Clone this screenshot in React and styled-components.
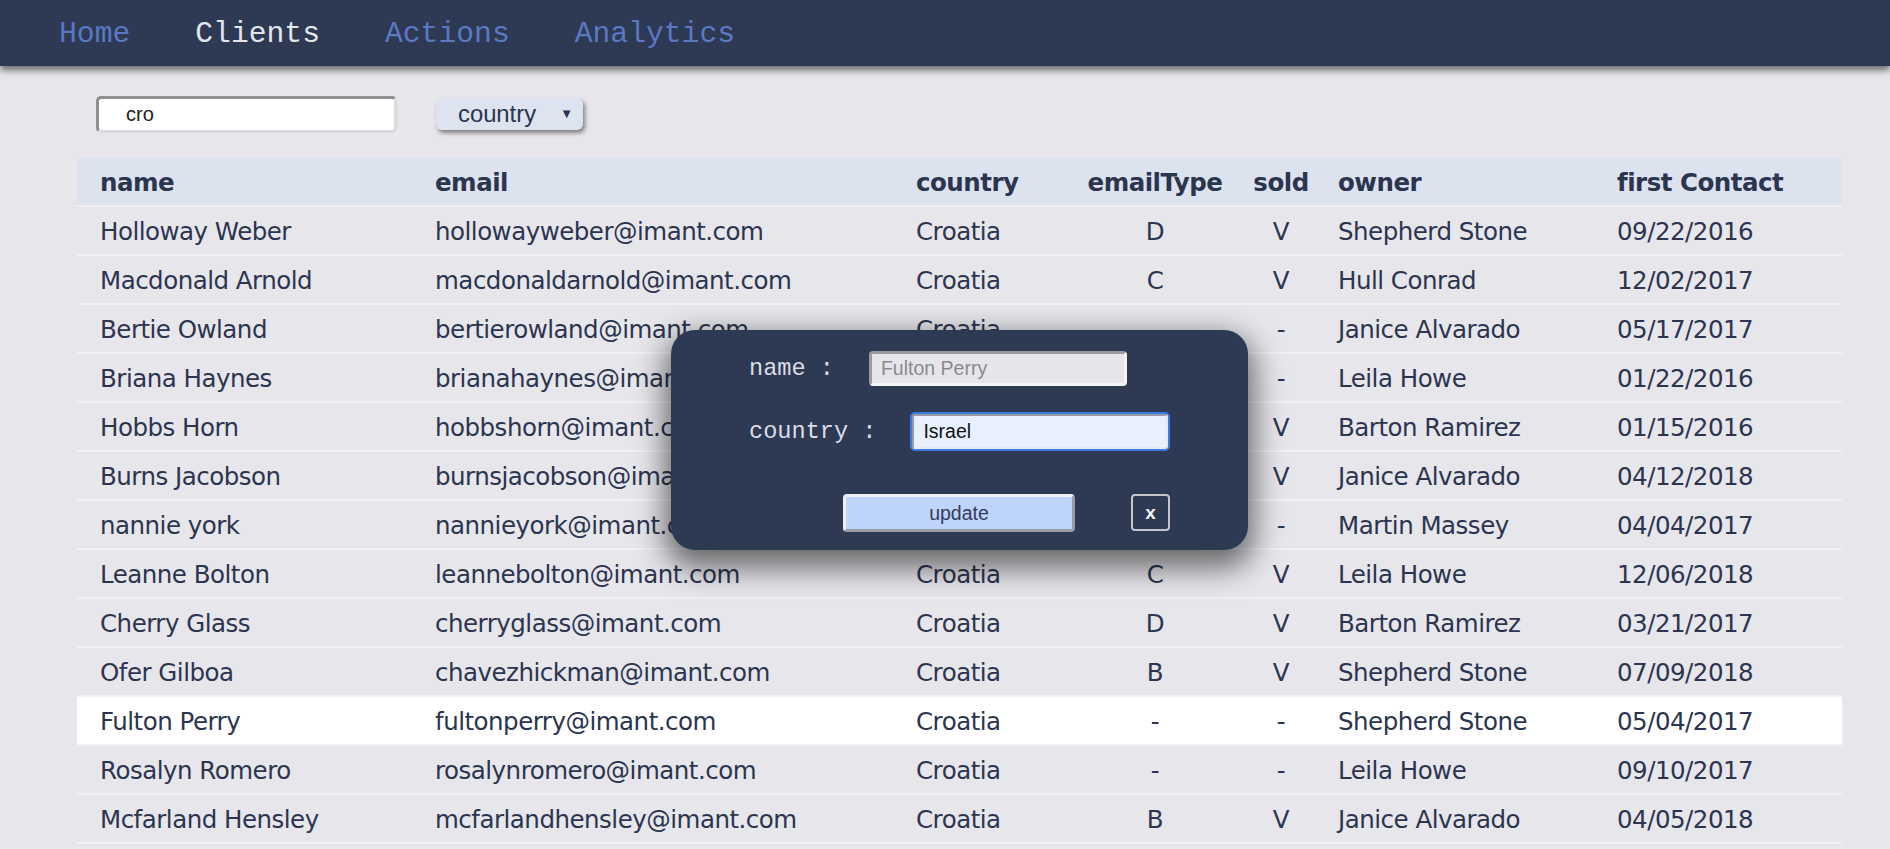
import React from 'react';
import styled, { createGlobalStyle } from 'styled-components';

const GlobalStyle = createGlobalStyle`
  html, body {
    margin: 0;
    padding: 0;
    background: #e7e6eb;
    overflow: hidden;
  }
`;

const Nav = styled.nav`
  height: 66px;
  background: #2e3a53;
  display: flex;
  align-items: center;
  gap: 65px;
  padding: 3px 0 0 59px;
  box-sizing: border-box;
  box-shadow: 0 4px 7px rgba(0, 0, 0, 0.55);
  position: relative;
  z-index: 1;
`;

const NavItem = styled.a`
  font-family: "Liberation Mono", "Courier New", monospace;
  font-size: 29.7px;
  color: ${({ $active }) => ($active ? '#e4e4ec' : '#5a78c4')};
  text-decoration: none;
  line-height: 1;
`;

const Main = styled.main`
  padding: 30px 48px 0 77px;
`;

const Filters = styled.div`
  display: flex;
  align-items: center;
  gap: 39px;
  padding-left: 19px;
  margin-bottom: 25px;
`;

const SearchInput = styled.input`
  box-sizing: border-box;
  width: 301px;
  height: 37px;
  border: 3px solid;
  border-color: #8e8e93 #dcdce0 #dcdce0 #8e8e93;
  border-radius: 5px;
  background: #fff;
  padding: 0 0 0 27px;
  font-family: "Liberation Sans", Arial, sans-serif;
  font-size: 20px;
  color: #222;
  outline: none;
`;

const SelectBox = styled.div`
  box-sizing: border-box;
  width: 147px;
  height: 32px;
  margin-top: -2px;
  background: #dde3ef;
  border-radius: 6px;
  box-shadow: 2px 3px 4px rgba(0, 0, 0, 0.45);
  display: flex;
  align-items: center;
  justify-content: space-between;
  padding: 0 10px 0 22px;
  font-family: "Liberation Sans", Arial, sans-serif;
  font-size: 23.8px;
  color: #2b3450;
`;

const Arrow = styled.span`
  font-size: 13px;
  color: #2b3450;
`;

const Table = styled.div`
  width: 1765px;
  font-family: "DejaVu Sans", Verdana, sans-serif;
  letter-spacing: -0.5px;
  color: #2c3550;
`;

const Row = styled.div`
  display: grid;
  grid-template-columns: 335px 481px 170px 184px 68px 279px 1fr;
  height: 49px;
  padding-top: 2px;
  box-sizing: border-box;
  align-items: center;
  border-bottom: 2px solid #f1f1f4;
  background: ${({ $head, $selected }) =>
    $head ? '#dde3ee' : $selected ? '#ffffff' : 'transparent'};
  font-size: 24.5px;
  font-weight: ${({ $head }) => ($head ? 700 : 400)};
`;

const Cell = styled.div`
  padding: 0 ${({ $center }) => ($center ? 0 : 23)}px;
  white-space: nowrap;
  text-align: ${({ $center }) => ($center ? 'center' : 'left')};
`;

const Modal = styled.div`
  position: absolute;
  left: 671px;
  top: 330px;
  width: 577px;
  height: 220px;
  box-sizing: border-box;
  padding: 21px 78px 18px;
  background: #2e3a53;
  border-radius: 24px;
  box-shadow: 0 12px 30px 6px rgba(0, 0, 0, 0.55);
  display: flex;
  flex-direction: column;
`;

const Field = styled.div`
  display: flex;
  align-items: center;
  margin-top: ${({ $gap }) => $gap || 0}px;
`;

const Label = styled.label`
  font-family: "Liberation Mono", "Courier New", monospace;
  font-size: 23.6px;
  color: #dcdce4;
  margin-right: 35px;
`;

const ModalInput = styled.input`
  box-sizing: border-box;
  width: 258px;
  height: ${({ $focus }) => ($focus ? 37 : 35)}px;
  border: 3px solid;
  border-color: ${({ $focus }) =>
    $focus ? '#9a9aa4 #e6e6ee #e6e6ee #9a9aa4' : '#9a9a9f #f4f4f6 #f4f4f6 #9a9a9f'};
  border-radius: 4px;
  background: ${({ $focus }) => ($focus ? '#e8f0fe' : '#e6e5ea')};
  outline: ${({ $focus }) => ($focus ? '2px solid #3c7ae0' : 'none')};
  outline-offset: -1px;
  padding: 0 0 0 9px;
  font-family: "Liberation Sans", Arial, sans-serif;
  font-size: 19.5px;
  color: ${({ $focus }) => ($focus ? '#111' : '#8a8a8e')};
`;

const Buttons = styled.div`
  display: flex;
  justify-content: flex-end;
  gap: 56px;
  margin-top: 44px;
`;

const UpdateButton = styled.button`
  box-sizing: border-box;
  width: 232px;
  height: 38px;
  border: 3px solid;
  border-color: #eef0f6 #9c9ca4 #9c9ca4 #eef0f6;
  border-radius: 4px;
  background: #bfd4fb;
  font-family: "Liberation Sans", Arial, sans-serif;
  font-size: 19.5px;
  color: #333c58;
`;

const CloseButton = styled.button`
  box-sizing: border-box;
  width: 39px;
  height: 37px;
  border: 2px solid #c4c4cc;
  border-radius: 4px;
  background: transparent;
  font-family: "Liberation Sans", Arial, sans-serif;
  font-size: 19px;
  font-weight: 700;
  color: #f2f2f6;
  padding: 0;
`;

const columns = ['name', 'email', 'country', 'emailType', 'sold', 'owner', 'first Contact'];

const clients = [
  ['Holloway Weber', 'hollowayweber@imant.com', 'Croatia', 'D', 'V', 'Shepherd Stone', '09/22/2016'],
  ['Macdonald Arnold', 'macdonaldarnold@imant.com', 'Croatia', 'C', 'V', 'Hull Conrad', '12/02/2017'],
  ['Bertie Owland', 'bertierowland@imant.com', 'Croatia', '-', '-', 'Janice Alvarado', '05/17/2017'],
  ['Briana Haynes', 'brianahaynes@imant.com', 'Croatia', '-', '-', 'Leila Howe', '01/22/2016'],
  ['Hobbs Horn', 'hobbshorn@imant.com', 'Croatia', 'A', 'V', 'Barton Ramirez', '01/15/2016'],
  ['Burns Jacobson', 'burnsjacobson@imant.com', 'Croatia', 'B', 'V', 'Janice Alvarado', '04/12/2018'],
  ['nannie york', 'nannieyork@imant.com', 'Croatia', '-', '-', 'Martin Massey', '04/04/2017'],
  ['Leanne Bolton', 'leannebolton@imant.com', 'Croatia', 'C', 'V', 'Leila Howe', '12/06/2018'],
  ['Cherry Glass', 'cherryglass@imant.com', 'Croatia', 'D', 'V', 'Barton Ramirez', '03/21/2017'],
  ['Ofer Gilboa', 'chavezhickman@imant.com', 'Croatia', 'B', 'V', 'Shepherd Stone', '07/09/2018'],
  ['Fulton Perry', 'fultonperry@imant.com', 'Croatia', '-', '-', 'Shepherd Stone', '05/04/2017'],
  ['Rosalyn Romero', 'rosalynromero@imant.com', 'Croatia', '-', '-', 'Leila Howe', '09/10/2017'],
  ['Mcfarland Hensley', 'mcfarlandhensley@imant.com', 'Croatia', 'B', 'V', 'Janice Alvarado', '04/05/2018'],
  ['Nash Mccall', 'nashmccall@imant.com', 'Croatia', 'A', 'V', 'Hull Conrad', '02/11/2017'],
];

const centered = [3, 4];

const App = () => {
  return (
    <>
      <GlobalStyle />
      <Nav>
        <NavItem>Home</NavItem>
        <NavItem $active>Clients</NavItem>
        <NavItem>Actions</NavItem>
        <NavItem>Analytics</NavItem>
      </Nav>
      <Main>
        <Filters>
          <SearchInput defaultValue="cro" />
          <SelectBox>
            <span>country</span>
            <Arrow>▼</Arrow>
          </SelectBox>
        </Filters>
        <Table>
          <Row $head>
            {columns.map((c, i) => (
              <Cell key={c} $center={centered.includes(i)}>{c}</Cell>
            ))}
          </Row>
          {clients.map((row) => (
            <Row key={row[1]} $selected={row[0] === 'Fulton Perry'}>
              {row.map((v, i) => (
                <Cell key={i} $center={centered.includes(i)}>{v}</Cell>
              ))}
            </Row>
          ))}
        </Table>
      </Main>
      <Modal>
        <Field>
          <Label>name :</Label>
          <ModalInput defaultValue="Fulton Perry" disabled />
        </Field>
        <Field $gap={27}>
          <Label>country :</Label>
          <ModalInput $focus defaultValue="Israel" />
        </Field>
        <Buttons>
          <UpdateButton>update</UpdateButton>
          <CloseButton>x</CloseButton>
        </Buttons>
      </Modal>
    </>
  );
};

export default App;
